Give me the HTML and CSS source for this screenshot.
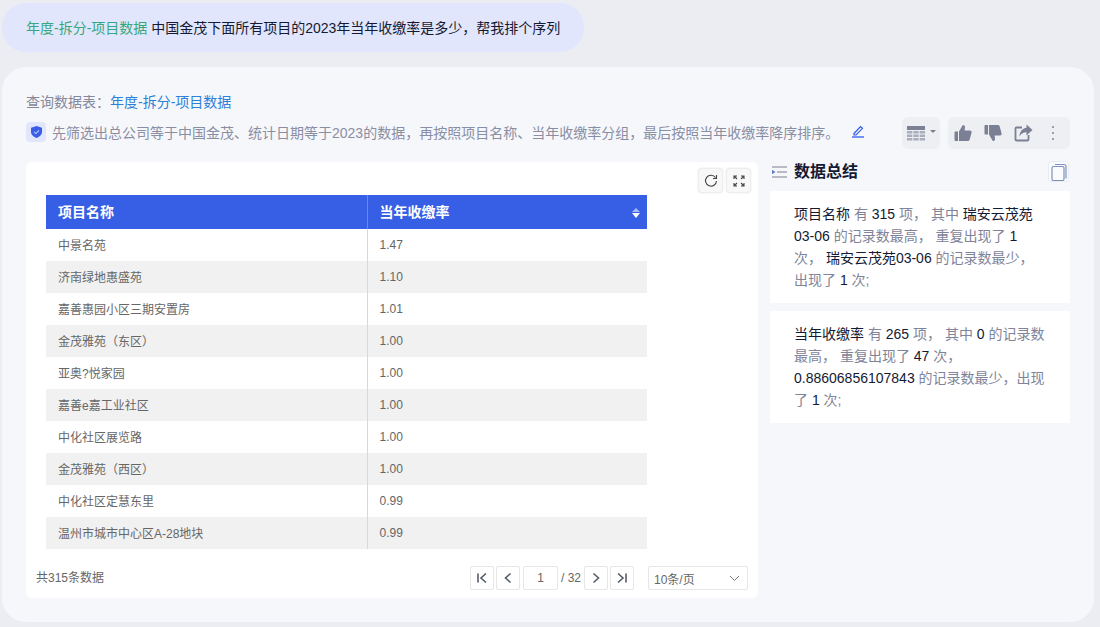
FILE: index.html
```html
<!DOCTYPE html>
<html lang="zh-CN">
<head>
  <meta charset="UTF-8">
  <title>数据查询</title>
  <link rel="stylesheet" href="styles.css">
</head>
<body>
  <div class="question">
    <span class="question-tag">年度-拆分-项目数据</span> 中国金茂下面所有项目的2023年当年收缴率是多少，帮我排个序列
  </div>

  <div class="panel">
    <div class="source">查询数据表：<span class="source-name">年度-拆分-项目数据</span></div>

    <div class="desc-row">
      <span class="shield">
        <svg width="11" height="12" viewBox="0 0 11 12"><path d="M5.500 0 11 1.800v4.200c0 2.800-2.400 4.800-5.500 6C2.400 10.800 0 8.800 0 6V1.800z" fill="#3a5de6"/><path d="M3 5.800 4.900 7.600 8 4.400" fill="none" stroke="#b9c9fb" stroke-width="1.100"/></svg>
      </span>
      <span class="desc">先筛选出总公司等于中国金茂、统计日期等于2023的数据，再按照项目名称、当年收缴率分组，最后按照当年收缴率降序排序。</span>
      <svg class="edit" width="14" height="14" viewBox="0 0 14 14"><path d="M3 9.500 9.500 2.500 11.500 4.300 5 11H3z" fill="none" stroke="#2f5be7" stroke-width="1.200"/><path d="M1 13h12" stroke="#1f4fee" stroke-width="1.200"/></svg>
      <div class="tools">
        <div class="tool-box tool-box-table">
          <svg width="34" height="16" viewBox="0 0 34 16"><path d="M1 1h18v4H1z" fill="#7b8094"/><path d="M1 6h5.300v2.500H1zM7.300 6h5.400v2.500H7.300zM13.700 6H19v2.500h-5.300zM1 9.500h5.300V12H1zM7.300 9.500h5.400V12H7.300zM13.700 9.500H19V12h-5.300zM1 13h5.300v2.500H1zM7.300 13h5.400v2.500H7.300zM13.700 13H19v2.500h-5.300z" fill="#a9adbc"/><path d="M24 5h6l-3 3z" fill="#7b8094"/></svg>
        </div>
        <div class="tool-box tool-box-wide">
          <svg width="18" height="18" viewBox="0 0 18 18"><path d="M.5 8.500c0-.6.400-1 1-1h2.500V17H1.500c-.6 0-1-.4-1-1zM5 7.500 8.800 1c1.600 0 2.400 1 2.200 2.600L10.600 6.500H16c1.200 0 1.900 1 1.600 2l-1.900 7c-.2.900-.9 1.500-1.800 1.500H5z" fill="#7b8094"/></svg>
          <svg width="18" height="18" viewBox="0 0 18 18"><path d="M.5 9.500c0 .6.400 1 1 1h2.500V1H1.500c-.6 0-1 .4-1 1zM5 10.500 8.800 17c1.600 0 2.400-1 2.200-2.600l-.4-2.900H16c1.200 0 1.900-1 1.600-2l-1.900-7c-.2-.9-.9-1.500-1.800-1.500H5z" fill="#7b8094"/></svg>
          <svg width="19" height="18" viewBox="0 0 19 18"><path d="M8 3.500H2.500a1 1 0 0 0-1 1v11a1 1 0 0 0 1 1h11a1 1 0 0 0 1-1V11" fill="none" stroke="#7b8094" stroke-width="1.800"/><path d="M12.500.5 18.500 6l-6 5.500V8.300C9.500 8.300 7 9.500 5.500 12.500c0-5 3-8.300 7-8.800z" fill="#7b8094"/></svg>
          <svg class="more" width="4" height="16" viewBox="0 0 4 16"><circle cx="2" cy="2" r="1" fill="#7b8094"/><circle cx="2" cy="8" r="1" fill="#7b8094"/><circle cx="2" cy="14" r="1" fill="#7b8094"/></svg>
        </div>
      </div>
    </div>

    <div class="content">
      <div class="card">
        <div class="card-actions">
          <button class="icon-btn">
            <svg width="14" height="14" viewBox="0 0 14 14"><path d="M11.500 3.500A5.500 5.500 0 1 0 12.500 7" fill="none" stroke="#444" stroke-width="1.100"/><path d="M12.500 1v3.500H9" fill="none" stroke="#444" stroke-width="1.100"/></svg>
          </button>
          <button class="icon-btn">
            <svg width="12" height="12" viewBox="0 0 12 12"><path d="M1 4V1h3M8 1h3v3M11 8v3H8M4 11H1V8M1.500 1.500 4 4M10.500 1.500 8 4M10.500 10.500 8 8M1.500 10.500 4 8" fill="none" stroke="#444" stroke-width="1.100"/></svg>
          </button>
        </div>

        <table class="data-table">
          <thead>
            <tr>
              <th class="col-name">项目名称</th>
              <th>当年收缴率<span class="sort"></span></th>
            </tr>
          </thead>
          <tbody>
            <tr><td>中景名苑</td><td>1.47</td></tr>
            <tr><td>济南绿地惠盛苑</td><td>1.10</td></tr>
            <tr><td>嘉善惠园小区三期安置房</td><td>1.01</td></tr>
            <tr><td>金茂雅苑（东区）</td><td>1.00</td></tr>
            <tr><td>亚奥?悦家园</td><td>1.00</td></tr>
            <tr><td>嘉善e嘉工业社区</td><td>1.00</td></tr>
            <tr><td>中化社区展览路</td><td>1.00</td></tr>
            <tr><td>金茂雅苑（西区）</td><td>1.00</td></tr>
            <tr><td>中化社区定慧东里</td><td>0.99</td></tr>
            <tr><td>温州市城市中心区A-28地块</td><td>0.99</td></tr>
          </tbody>
        </table>

        <div class="pager">
          <span class="total">共315条数据</span>
          <button class="page-btn"><svg width="12" height="12" viewBox="0 0 12 12"><path d="M2 1.500v9M10 1.500 5 6l5 4.500" fill="none" stroke="#555c6b" stroke-width="1.600"/></svg></button>
          <button class="page-btn"><svg width="12" height="12" viewBox="0 0 12 12"><path d="M8.500 1.500 3.500 6l5 4.500" fill="none" stroke="#555c6b" stroke-width="1.600"/></svg></button>
          <span class="page-input">1</span>
          <span class="page-count">/ 32</span>
          <button class="page-btn"><svg width="12" height="12" viewBox="0 0 12 12"><path d="M3.500 1.500 8.500 6l-5 4.500" fill="none" stroke="#555c6b" stroke-width="1.600"/></svg></button>
          <button class="page-btn"><svg width="12" height="12" viewBox="0 0 12 12"><path d="M10 1.500v9M2 1.500 7 6l-5 4.500" fill="none" stroke="#555c6b" stroke-width="1.600"/></svg></button>
          <div class="page-size">
            <span>10条/页</span>
            <svg width="11" height="7" viewBox="0 0 11 7"><path d="M1 1l4.500 4.500L10 1" fill="none" stroke="#777" stroke-width="1"/></svg>
          </div>
        </div>
      </div>

      <div class="summary">
        <div class="summary-head">
          <svg class="list-icon" width="16" height="12" viewBox="0 0 16 12"><path d="M1 1h15M6 6h10M1 11h15" stroke="#7b8094" stroke-width="1.100"/><path d="M1 3.800 4.500 6 1 8.200z" fill="#5f7fc4"/></svg>
          <span class="summary-title">数据总结</span>
          <button class="copy-btn">
            <svg width="16" height="18" viewBox="0 0 16 18"><rect x="1" y="3.500" width="12" height="14" rx="1.500" fill="none" stroke="#7e8fb8" stroke-width="1.200"/><path d="M4 1.500h9a2 2 0 0 1 2 2v12" fill="none" stroke="#7e8fb8" stroke-width="1.200"/></svg>
          </button>
        </div>

        <div class="summary-item">
          <b>项目名称</b> 有 <b>315</b> 项， 其中 <b>瑞安云茂苑03-06</b> 的记录数最高， 重复出现了 <b>1</b> 次， <b>瑞安云茂苑03-06</b> 的记录数最少，出现了 <b>1</b> 次;
        </div>
        <div class="summary-item">
          <b>当年收缴率</b> 有 <b>265</b> 项， 其中 <b>0</b> 的记录数最高， 重复出现了 <b>47</b> 次， <b>0.88606856107843</b> 的记录数最少，出现了 <b>1</b> 次;
        </div>
      </div>
    </div>
  </div>
</body>
</html>
```

FILE: styles.css
```css
* {
  box-sizing: border-box;
}
html, body {
  height: 100%;
}
body {
  margin: 0;
  overflow: hidden;
  background-color: #ecedf3;
  font-family: "Liberation Sans", "Noto Sans CJK SC", sans-serif;
  font-size: 14px;
  color: #6b7088;
}
.question {
  width: 582px;
  height: 49px;
  margin: 3px 0 0 2px;
  padding-left: 24px;
  line-height: 50px;
  background-color: #e1e6fd;
  border-radius: 24px;
  color: #141a33;
}
.question-tag {
  color: #37a77c;
}
.panel {
  height: 555px;
  margin: 15px 6px 0 2px;
  padding: 26px 24px 0;
  background-color: #f6f7fb;
  border-radius: 24px;
}
.source {
  height: 18px;
  line-height: 18px;
  color: #84889a;
}
.source-name {
  color: #2c80d8;
}
.desc-row {
  display: flex;
  align-items: center;
  height: 32px;
  margin-top: 5px;
}
.shield {
  display: flex;
  align-items: center;
  justify-content: center;
  width: 20px;
  height: 20px;
  margin-right: 6px;
  background-color: #e1e6fd;
  border-radius: 4px;
}
.desc {
  color: #8a8ea3;
  white-space: nowrap;
}
.edit {
  flex: none;
  margin-left: 12px;
  margin-bottom: 2px;
}
.tools {
  display: flex;
  gap: 8px;
  margin-left: auto;
  margin-top: 2px;
}
.tool-box {
  display: flex;
  align-items: center;
  justify-content: center;
  width: 38px;
  height: 32px;
  background-color: #eeeff3;
  border-radius: 6px;
}
.tool-box svg {
  flex: none;
}
.tool-box-table {
  justify-content: flex-start;
  padding-left: 4px;
}
.tool-box-wide {
  justify-content: flex-start;
  gap: 12px;
  width: 122px;
  padding-left: 6px;
}
.more {
  margin-left: 6px;
}
.content {
  display: flex;
  gap: 12px;
  margin-top: 14px;
}
.card {
  width: 732px;
  height: 436px;
  padding: 6px 7px 0 20px;
  background-color: #fff;
  border-radius: 6px;
}
.card-actions {
  display: flex;
  justify-content: flex-end;
  gap: 3px;
  height: 27px;
}
.icon-btn {
  display: flex;
  align-items: center;
  justify-content: center;
  width: 25px;
  height: 25px;
  padding: 0;
  background-color: #f8f8f8;
  border: 1px solid #eceded;
  border-radius: 4px;
  box-shadow: 0 0 2px rgba(0, 0, 0, 0.1);
}
.data-table {
  width: 601px;
  border-collapse: collapse;
  table-layout: fixed;
  font-size: 12px;
  color: #666;
}
.data-table th {
  position: relative;
  height: 34px;
  padding: 0 12px 2px;
  background-color: #375fe5;
  color: #fff;
  font-size: 14px;
  font-weight: bold;
  text-align: left;
}
.data-table td {
  height: 32px;
  padding: 0 12px;
}
.data-table td:first-child {
  padding-bottom: 2px;
}
.col-name {
  width: 321px;
}
.data-table th:first-child,
.data-table td:first-child {
  border-right: 1px solid #d8d8d8;
}
.data-table th:first-child {
  border-right-color: #6d88ea;
}
.data-table tbody tr:nth-child(even) {
  background-color: #f1f1f1;
}
.sort {
  position: absolute;
  right: 7px;
  top: 18px;
  width: 0;
  height: 0;
  border-left: 4px solid transparent;
  border-right: 4px solid transparent;
  border-top: 5px solid #fff;
}
.sort::before {
  content: "";
  position: absolute;
  left: -4px;
  top: -10px;
  border-left: 4px solid transparent;
  border-right: 4px solid transparent;
  border-bottom: 4px solid #a9bbf5;
}
.pager {
  display: flex;
  align-items: center;
  gap: 2px;
  height: 24px;
  margin-top: 17px;
  margin-right: 3px;
  font-size: 12px;
  color: #666;
}
.total {
  margin-left: -10px;
  margin-right: auto;
  padding-bottom: 3px;
}
.page-btn {
  display: flex;
  align-items: center;
  justify-content: center;
  width: 24px;
  height: 24px;
  padding: 0;
  background-color: #fff;
  border: 1px solid #e6e6e6;
  border-radius: 2px;
}
.page-input {
  width: 35px;
  height: 24px;
  margin-left: 1px;
  line-height: 22px;
  text-align: center;
  border: 1px solid #e6e6e6;
  border-radius: 2px;
}
.page-count {
  width: 21px;
  margin-left: 1px;
}
.page-size {
  display: flex;
  align-items: center;
  justify-content: space-between;
  width: 100px;
  height: 24px;
  margin-left: 12px;
  padding: 0 7px 0 5px;
  border: 1px solid #e6e6e6;
  border-radius: 2px;
}
.summary {
  width: 300px;
}
.summary-head {
  display: flex;
  align-items: center;
  height: 16px;
  margin-bottom: 13px;
  padding-left: 1px;
}
.list-icon {
  margin-top: 3px;
}
.summary-title {
  margin-left: 7px;
  font-size: 16px;
  font-weight: bold;
  color: #141a33;
}
.copy-btn {
  display: flex;
  flex: none;
  align-items: center;
  justify-content: center;
  width: 21px;
  height: 21px;
  margin-left: auto;
  margin-top: 3px;
  margin-right: 1px;
  padding: 0;
  background-color: #fafbfd;
  border: 1px solid #e8ebf3;
  border-radius: 3px;
}
.summary-item {
  padding: 12px 24px;
  margin-bottom: 8px;
  background-color: #fff;
  line-height: 22px;
  color: #80849a;
}
.summary-item b {
  font-weight: normal;
  color: #141a33;
}
```
